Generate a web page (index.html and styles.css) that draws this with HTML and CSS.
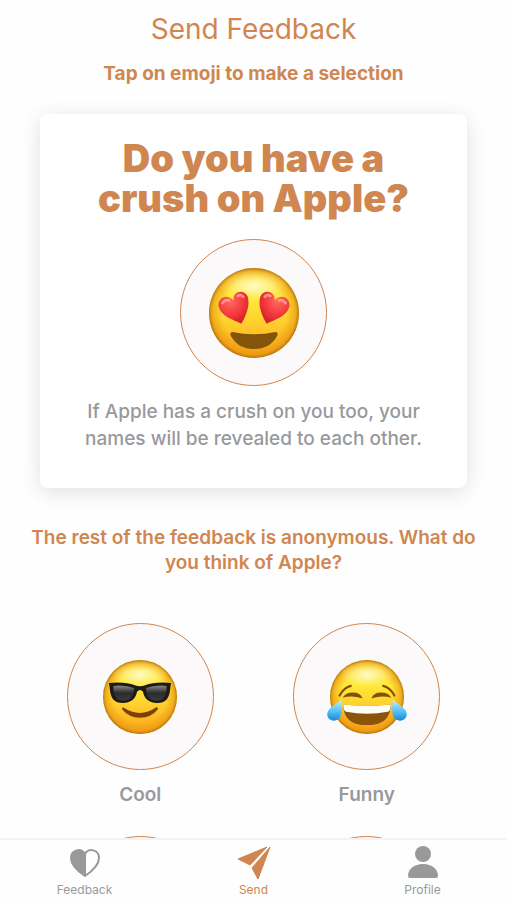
FILE: index.html
```html
<!DOCTYPE html>
<html lang="en">
<head>
  <meta charset="UTF-8" />
  <meta name="viewport" content="width=device-width, initial-scale=1" />
  <title>Send Feedback</title>
  <link rel="stylesheet" href="styles.css">
</head>
<body>

  <!-- shared emoji fills -->
  <svg class="defs" width="0" height="0" aria-hidden="true">
    <defs>
      <linearGradient id="face" x1="0" y1="0" x2="0" y2="1">
        <stop offset="0" stop-color="#ffd84a" />
        <stop offset="0.35" stop-color="#ffe838" />
        <stop offset="0.6" stop-color="#ffd02e" />
        <stop offset="1" stop-color="#f9a31a" />
      </linearGradient>
      <radialGradient id="edge" cx="0.5" cy="0.5" r="0.5">
        <stop offset="0.7" stop-color="#e8920c" stop-opacity="0" />
        <stop offset="0.92" stop-color="#e8920c" stop-opacity="0.6" />
        <stop offset="1" stop-color="#a56a12" stop-opacity="0.85" />
      </radialGradient>
      <radialGradient id="shine" cx="0.5" cy="0.5" r="0.5">
        <stop offset="0" stop-color="#fffdd0" stop-opacity="0.95" />
        <stop offset="0.5" stop-color="#fff9a0" stop-opacity="0.6" />
        <stop offset="1" stop-color="#ffee60" stop-opacity="0" />
      </radialGradient>
      <radialGradient id="heart" cx="0.4" cy="0.3" r="0.7">
        <stop offset="0" stop-color="#ff6a60" />
        <stop offset="0.6" stop-color="#f5393c" />
        <stop offset="1" stop-color="#d3202b" />
      </radialGradient>
      <linearGradient id="lens" x1="0" y1="0" x2="0" y2="1">
        <stop offset="0" stop-color="#8a8a8a" />
        <stop offset="0.35" stop-color="#454545" />
        <stop offset="0.5" stop-color="#2c2c2c" />
        <stop offset="1" stop-color="#3a3a3a" />
      </linearGradient>
      <linearGradient id="tear" x1="0" y1="0" x2="0" y2="1">
        <stop offset="0" stop-color="#b9efff" />
        <stop offset="0.6" stop-color="#4cbcf3" />
        <stop offset="1" stop-color="#1b86d6" />
      </linearGradient>
      <g id="head">
        <circle cx="50" cy="50" r="50" fill="url(#face)" />
        <circle cx="50" cy="50" r="50" fill="url(#edge)" />
        <ellipse cx="50" cy="20" rx="38" ry="18" fill="url(#shine)" />
      </g>
      <g id="heart-eye">
        <path fill="url(#heart)" d="M36 62 C28 58 14 54 11 44 C8 34 20 27 27 36 C27 24 40 24 43 32 C46 42 41 53 36 62 Z" />
        <path fill="none" stroke="#ffa79c" stroke-width="3" stroke-linecap="round" stroke-opacity="0.8" d="M15 39 Q18 35 22 36 M32 31 Q35 29 38 32" />
      </g>
    </defs>
  </svg>

  <main class="page">
    <h1>Send Feedback</h1>
    <p class="hint">Tap on emoji to make a selection</p>

    <section class="card">
      <h2>Do you have a crush on Apple?</h2>
      <button class="emoji emoji-large" type="button" aria-label="Crush">
        <svg viewBox="0 0 100 100">
          <use href="#head" />
          <use href="#heart-eye" />
          <use href="#heart-eye" transform="translate(100 0) scale(-1 1)" />
          <path fill="#83540a" d="M26 71 Q50 76 74 71 Q77 71 76 75 Q68 90 50 90 Q32 90 24 75 Q23 71 26 71 Z" />
        </svg>
      </button>
      <p>If Apple has a crush on you too, your names will be revealed to each other.</p>
    </section>

    <p class="question">The rest of the feedback is anonymous. What do you think of Apple?</p>

    <section class="choices">
      <div class="choice">
        <button class="emoji" type="button" aria-labelledby="cool">
          <svg viewBox="0 0 100 100">
            <use href="#head" />
            <path fill="#1d1a18" d="M8 31 Q30 29 43 34 Q50 37 57 34 Q70 29 92 31 L91 37 C90 52 85 58 73 58 C61 58 56 52 54 43 Q50 38 46 43 C44 52 39 58 27 58 C15 58 10 52 9 37 Z" />
            <path fill="url(#lens)" d="M14 35 Q29 33 42 38 C41 50 37 55 28 55 C18 55 14 49 14 35 Z M86 35 Q71 33 58 38 C59 50 63 55 72 55 C82 55 86 49 86 35 Z" />
            <path fill="#7d4006" d="M27 64 Q50 79 72 64 Q75 64 74 67 Q65 78 50 78 Q35 78 26 67 Q25 65 27 64 Z" />
          </svg>
        </button>
        <span id="cool">Cool</span>
      </div>
      <div class="choice">
        <button class="emoji" type="button" aria-labelledby="funny">
          <svg viewBox="0 0 100 100">
            <use href="#head" />
            <path fill="none" stroke="#83500b" stroke-width="3" stroke-linecap="round" d="M13 48 Q18 38 28 35 M87 48 Q82 38 72 35" />
            <path fill="#83500b" d="M17 51 Q21 44 31 44 Q41 44 44 52 Q30 47 17 51 Z M83 51 Q79 44 69 44 Q59 44 56 52 Q70 47 83 51 Z" />
            <path fill="#8b540a" d="M18 60 Q50 64 82 60 C82 80 70 88 50 88 C30 88 18 80 18 60 Z" />
            <path fill="#fffdf5" d="M18 60 Q50 64 82 60 Q82 69 78 70 Q50 75 22 70 Q18 69 18 60 Z" />
            <path fill="url(#tear)" d="M15 54 C17 68 17 81 5 82 C-3 82 -6 74 -2 68 C2 62 9 59 15 54 Z M85 54 C83 68 83 81 95 82 C103 82 106 74 102 68 C98 62 91 59 85 54 Z" />
          </svg>
        </button>
        <span id="funny">Funny</span>
      </div>
      <div class="choice">
        <button class="emoji" type="button" aria-label="Next choice"></button>
      </div>
      <div class="choice">
        <button class="emoji" type="button" aria-label="Next choice"></button>
      </div>
    </section>
  </main>

  <nav class="tabs">
    <a href="#feedback">
      <svg viewBox="0 0 36 36">
        <path fill="none" stroke="currentColor" stroke-width="2" stroke-linejoin="round" d="M18 31 C12 27 4 20 4 13 C4 5 14 2 18 9 C22 2 32 5 32 13 C32 20 24 27 18 31 Z" />
        <path fill="currentColor" d="M19 31 L18 31 C12 27 4 20 4 13 C4 5 14 2 19 9 Z" />
      </svg>
      Feedback
    </a>
    <a class="active" href="#send">
      <svg viewBox="0 0 36 36">
        <path fill="currentColor" stroke="currentColor" stroke-linejoin="round" d="M2 14 L31 2 L14 20 Z M34 2 L16 23 L22 34 Z" />
      </svg>
      Send
    </a>
    <a href="#profile">
      <svg viewBox="0 0 36 36">
        <circle cx="18" cy="9" r="8" fill="currentColor" />
        <path fill="currentColor" d="M3 31 C3 24 9 19 18 19 C27 19 33 24 33 31 Q33 33 31 33 H5 Q3 33 3 31 Z" />
      </svg>
      Profile
    </a>
  </nav>

</body>
</html>
```
FILE: styles.css
```css
* {
  box-sizing: border-box;
}
body {
  display: flex;
  flex-direction: column;
  height: 100vh;
  margin: 0;
  background: #fefefe;
  color: #d08650;
  font-family: Inter, "Liberation Sans", sans-serif;
  text-align: center;
}
h1, h2, p {
  margin: 0;
}
.defs {
  position: absolute;
}
.page {
  flex: 1;
  min-height: 0;
  overflow: hidden;
  padding: 11px 27px 0;
}
h1 {
  font-size: 28px;
  font-weight: 400;
  line-height: 36px;
}
.hint {
  margin-top: 15px;
  font-size: 19px;
  font-weight: 700;
  line-height: 24px;
}
.card {
  margin: 28px 13px 0;
  padding: 24px 40px 36px;
  border-radius: 8px;
  background: #fff;
  box-shadow: 0 4px 20px rgba(0, 0, 0, 0.12);
}
.card h2 {
  margin-bottom: 21px;
  font-size: 38px;
  font-weight: 900;
  line-height: 40px;
}
.card p {
  margin-top: 12px;
  color: #97999d;
  font-size: 19px;
  font-weight: 500;
  line-height: 27px;
}
.emoji {
  display: flex;
  align-items: center;
  justify-content: center;
  width: 147px;
  height: 147px;
  margin: 0 auto;
  padding: 0;
  border: 1px solid #d08650;
  border-radius: 50%;
  background: #fcf9fa;
  cursor: pointer;
}
.emoji svg {
  width: 74px;
  height: 74px;
  overflow: visible;
}
.emoji-large svg {
  width: 90px;
  height: 90px;
}
.question {
  margin-top: 37px;
  font-size: 19px;
  font-weight: 600;
  line-height: 25px;
}
.choices {
  display: grid;
  grid-template-columns: 1fr 1fr;
  row-gap: 29px;
  margin-top: 48px;
}
.choice span {
  display: block;
  margin-top: 13px;
  color: #97999d;
  font-size: 19px;
  font-weight: 600;
  line-height: 24px;
}
.tabs {
  display: flex;
  height: 62px;
  padding-top: 5px;
  border-top: 2px solid #f3f3f3;
  background: #fefefe;
}
.tabs a {
  display: flex;
  flex: 1;
  flex-direction: column;
  align-items: center;
  gap: 1px;
  color: #999;
  font-size: 12px;
  line-height: 16px;
  text-decoration: none;
}
.tabs .active {
  color: #d08650;
}
.tabs svg {
  width: 36px;
  height: 36px;
}
```
